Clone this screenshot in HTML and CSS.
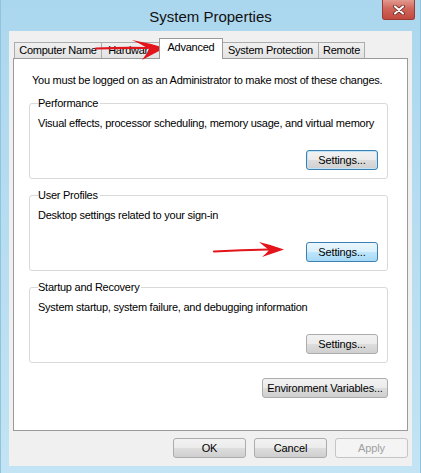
FILE: index.html
```html
<!DOCTYPE html>
<html lang="en">
<head>
  <meta charset="UTF-8" />
  <title>System Properties</title>
  <link rel="stylesheet" href="styles.css">
</head>
<body>
  <div class="window">
    <div class="titlebar">
      <span class="title">System Properties</span>
      <button class="close" aria-label="Close">
        <svg width="12" height="10" viewBox="0 0 12 10">
          <path d="M2 1.5 L10 8.5 M10 1.5 L2 8.5" stroke="#5a1a14" stroke-width="3.6" stroke-linecap="round"/>
          <path d="M2 1.5 L10 8.5 M10 1.5 L2 8.5" stroke="#fff" stroke-width="2.2" stroke-linecap="round"/>
        </svg>
      </button>
    </div>

    <div class="client">
      <div class="tabs">
        <div class="tab tab-name">Computer Name</div>
        <div class="tab tab-hw">Hardware</div>
        <div class="tab tab-adv active">Advanced</div>
        <div class="tab tab-prot">System Protection</div>
        <div class="tab tab-remote">Remote</div>
      </div>

      <div class="panel">
        <p class="intro">You must be logged on as an Administrator to make most of these changes.</p>

        <fieldset class="group">
          <legend>Performance</legend>
          <p class="desc">Visual effects, processor scheduling, memory usage, and virtual memory</p>
          <div class="row"><button class="btn hot">Settings...</button></div>
        </fieldset>

        <fieldset class="group">
          <legend>User Profiles</legend>
          <p class="desc">Desktop settings related to your sign-in</p>
          <div class="row"><button class="btn hover">Settings...</button></div>
        </fieldset>

        <fieldset class="group">
          <legend>Startup and Recovery</legend>
          <p class="desc">System startup, system failure, and debugging information</p>
          <div class="row"><button class="btn">Settings...</button></div>
        </fieldset>

        <div class="row env-row"><button class="btn env">Environment Variables...</button></div>
      </div>

      <div class="actions">
        <button class="btn dlg">OK</button>
        <button class="btn dlg">Cancel</button>
        <button class="btn dlg" disabled>Apply</button>
      </div>
    </div>

    <!-- red annotation arrows drawn on top of the screenshot -->
    <svg class="arrows" width="421" height="473" viewBox="0 0 421 473">
      <path d="M95 48.5 Q120 47.5 146 48" stroke="#e3141b" stroke-width="2.2" fill="none" stroke-linecap="round"/>
      <path d="M131 40 Q148 43 164 48 Q152 54 141 60 Q146 54 148 49 Q140 44 131 40 Z" fill="#e3141b"/>
      <path d="M213 251.5 Q240 250 268 249.5" stroke="#e3141b" stroke-width="2.2" fill="none" stroke-linecap="round"/>
      <path d="M258 242 Q271 245 283 249.5 Q273 253 261 257 Q266 253 268 250 Q263 246 258 242 Z" fill="#e3141b"/>
    </svg>
  </div>
</body>
</html>
```

FILE: styles.css
```css
body {
  margin: 0;
  padding: 0;
  font-family: 'Liberation Sans', Arial, sans-serif;
  font-size: 11px;
  letter-spacing: -0.25px;
  color: #000;
  background: #fff;
}

.window {
  position: relative;
  width: 421px;
  height: 473px;
  box-sizing: border-box;
  padding: 0 8px 7px 8px;
  display: flex;
  flex-direction: column;
  background: linear-gradient(180deg, #abd7ee 0%, #b9def1 60%, #c2e4f4 100%);
  border-left: 1px solid #8fc3de;
  border-right: 1px solid #8fc3de;
}

.titlebar {
  height: 31px;
  flex-shrink: 0;
  display: grid;
  grid-template-columns: 1fr auto 1fr;
  align-items: start;
}

.title {
  grid-column: 2;
  font-size: 15px;
  line-height: 15px;
  letter-spacing: 0;
  margin-top: 9px;
  color: #111;
}

.close {
  grid-column: 3;
  justify-self: end;
  width: 33px;
  height: 20px;
  margin-right: -3px;
  padding: 0;
  border: 1px solid #9b3b33;
  border-top: none;
  border-radius: 0 0 3px 3px;
  background: linear-gradient(180deg, #e29a90 0%, #d0665b 45%, #c24a3f 100%);
  display: flex;
  align-items: center;
  justify-content: center;
}

.client {
  flex: 1;
  background: #f0f0f0;
  padding: 0 4px;
  display: flex;
  flex-direction: column;
}

.tabs {
  display: flex;
  align-items: flex-end;
  padding: 7px 0 0 1px;
  height: 20px;
}

.tab {
  height: 16px;
  line-height: 15px;
  box-sizing: border-box;
  flex-shrink: 0;
  text-align: center;
  border: 1px solid #acacac;
  border-bottom: none;
  margin-right: -1px;
  background: linear-gradient(180deg, #f0f0f0, #e3e3e3);
  color: #000;
}

.tab-name { width: 88px; }
.tab-hw { width: 60px; }
.tab-adv { width: 64px; }
.tab-prot { width: 97px; }
.tab-remote { width: 47px; }

.tab.active {
  position: relative;
  z-index: 1;
  height: 21px;
  line-height: 17px;
  margin: 0 -1px -1px -1px;
  background: #fff;
  border-color: #9a9a9a;
}

.panel {
  height: 373px;
  box-sizing: border-box;
  border: 1px solid #9a9a9a;
  background: #fff;
  padding: 14px 19px 0 15px;
  display: flex;
  flex-direction: column;
}

.intro {
  margin: 0 0 9px 3px;
  line-height: 14px;
  white-space: nowrap;
}

.group {
  margin: 0 0 9px 0;
  padding: 6px 9px 8px 8px;
  border: 1px solid #d9d9d9;
  border-radius: 3px;
}

.group legend {
  padding: 0 2px 0 0;
  line-height: 14px;
}

.desc {
  margin: 0;
  line-height: 14px;
  white-space: nowrap;
}

.row {
  display: flex;
  justify-content: flex-end;
  margin-top: 20px;
}

.env-row {
  margin-top: 6px;
}

.btn {
  height: 20px;
  width: 72px;
  padding: 0;
  font-family: inherit;
  font-size: 11px;
  letter-spacing: -0.15px;
  color: #000;
  border: 1px solid #acacac;
  border-radius: 3px;
  background: linear-gradient(180deg, #f2f2f2 0%, #ebebeb 50%, #dddddd 51%, #cfcfcf 100%);
}

.btn.hot {
  border-color: #3c7fb1;
  box-shadow: inset 0 0 0 1px #bfe4f8;
}

.btn.hover {
  border-color: #3c7fb1;
  background: linear-gradient(180deg, #eaf6fd 0%, #d9f0fc 50%, #bee6fd 51%, #a7d9f5 100%);
}

.btn.env {
  width: 126px;
}

.btn.dlg {
  width: 73px;
}

.btn:disabled {
  color: #a0a0a0;
  border-color: #c5c5c5;
  background: #f4f4f4;
}

.actions {
  display: flex;
  justify-content: flex-end;
  gap: 8px;
  margin-top: 7px;
}

.arrows {
  position: absolute;
  left: 0;
  top: 0;
  pointer-events: none;
}
```
